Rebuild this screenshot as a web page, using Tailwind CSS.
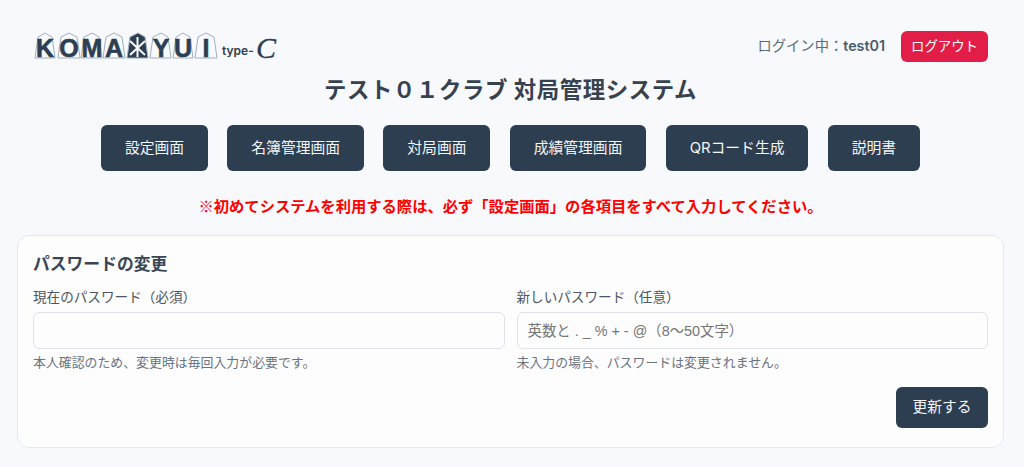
<!DOCTYPE html>
<html lang="ja">
  <head>
    <meta charset="UTF-8" />
    <meta name="viewport" content="width=device-width, initial-scale=1.0" />
    <title>テスト０１クラブ 対局管理システム</title>
    <script src="https://cdn.jsdelivr.net/npm/@tailwindcss/browser@4"></script>
  </head>
  <body class="bg-[#f8f9fc] font-['Inter','Noto_Sans_CJK_JP',sans-serif] text-[#2d3e50] [text-spacing-trim:space-all]">
    <div class="h-[467px] overflow-hidden pt-[30px] pr-[20px] pl-[17px]">
      <header class="flex h-[32px] items-center justify-between pr-[16px] pl-[17px]">
        <svg width="260" height="36" viewBox="0 0 260 36" role="img" aria-label="KOMADYUI type-C">
          <g fill="#f8f9fc" stroke="#9fb0bd" stroke-width="1">
            <path d="M1 30 L4 9 L11 5 L18 9 L21 30 Z" />
            <path d="M24 30 L27 9 L35 5 L43 9 L46 30 Z" />
            <path d="M47 30 L50 9 L58 5 L65 9 L68 30 Z" />
            <path d="M69 30 L72 9 L80 5 L88 9 L91 30 Z" />
            <path d="M93 30 L96 9 L104 5 L111 9 L114 30 Z" fill="#2d3e50" />
            <path d="M116 30 L119 9 L127 5 L134 9 L137 30 Z" />
            <path d="M139 30 L142 9 L149 5 L156 9 L159 30 Z" />
            <path d="M161 30 L164 9 L172 5 L180 9 L183 30 Z" />
          </g>
          <g fill="#2d3e50" stroke="#2d3e50" stroke-width="0.6" font-family="Liberation Sans" font-weight="700" font-size="25" text-anchor="middle">
            <text x="11" y="29">K</text>
            <text x="35" y="29">O</text>
            <text x="58" y="29">M</text>
            <text x="80" y="29">A</text>
            <text x="127" y="29">Y</text>
            <text x="149" y="29">U</text>
            <text x="172" y="29">I</text>
          </g>
          <path d="M103.5 9 V29 M96 13 L111 27 M111 13 L96 27" stroke="#f8f9fc" stroke-width="2" />
          <text x="188" y="27" fill="#2d3e50" font-family="Inter" font-weight="600" font-size="12">type-</text>
          <text x="222" y="30" fill="#2d3e50" stroke="#2d3e50" stroke-width="0.3" font-family="Liberation Serif" font-style="italic" font-size="30">C</text>
        </svg>
        <div class="flex items-center gap-[16px]">
          <span class="text-[14.3px] text-[#5a6b7b]">ログイン中：<b class="font-semibold text-[#4a5a6a]">test01</b></span>
          <button class="h-[31px] w-[87px] rounded-[6px] bg-[#e11d48] text-[13.4px] text-white">ログアウト</button>
        </div>
      </header>

      <h1 class="mt-[11px] text-center text-[22.4px] leading-[34px] font-bold tracking-[0.6px] text-[#36424f]">テスト０１クラブ 対局管理システム</h1>

      <nav class="mt-[18px] flex justify-center gap-[19.2px]">
        <a class="flex h-[46px] items-center rounded-[6px] bg-[#2d3e50] px-[24px] text-[14.8px] text-[#f4f5f7]">設定画面</a>
        <a class="flex h-[46px] items-center rounded-[6px] bg-[#2d3e50] px-[24px] text-[14.8px] text-[#f4f5f7]">名簿管理画面</a>
        <a class="flex h-[46px] items-center rounded-[6px] bg-[#2d3e50] px-[24px] text-[14.8px] text-[#f4f5f7]">対局画面</a>
        <a class="flex h-[46px] items-center rounded-[6px] bg-[#2d3e50] px-[24px] text-[14.8px] text-[#f4f5f7]">成績管理画面</a>
        <a class="flex h-[46px] items-center rounded-[6px] bg-[#2d3e50] px-[24px] text-[14.8px] text-[#f4f5f7]">QRコード生成</a>
        <a class="flex h-[46px] items-center rounded-[6px] bg-[#2d3e50] px-[24px] text-[14.8px] text-[#f4f5f7]">説明書</a>
      </nav>

      <p class="mt-[23px] text-center font-['Noto_Sans_CJK_JP',sans-serif] text-[15.3px] leading-[22px] font-bold text-[#ff0000]">※初めてシステムを利用する際は、必ず「設定画面」の各項目をすべて入力してください。</p>

      <section class="mt-[19px] h-[213px] rounded-[12px] border border-[#e5e9ef] bg-[#fdfdfe] px-[15px] pt-[16px]">
        <h2 class="text-[16.8px] leading-[24px] font-bold text-[#3b4653]">パスワードの変更</h2>
        <div class="mt-[11px] grid grid-cols-2 gap-[12px]">
          <div>
            <label class="block text-[13.6px] leading-[20px] text-[#4b5563]">現在のパスワード（必須）</label>
            <input type="password" class="mt-[5px] block h-[37px] w-full rounded-[6px] border border-[#dfe3e8] bg-[#fdfdfe] px-[10px] text-[15px]" />
            <p class="mt-[5px] text-[12.9px] leading-[18px] text-[#6b7280]">本人確認のため、変更時は毎回入力が必要です。</p>
          </div>
          <div>
            <label class="block text-[13.6px] leading-[20px] text-[#4b5563]">新しいパスワード（任意）</label>
            <input type="password" placeholder="英数と . _ % + - @（8〜50文字）" class="mt-[5px] block h-[37px] w-full rounded-[6px] border border-[#dfe3e8] bg-[#fdfdfe] px-[10px] font-['Liberation_Sans','Noto_Sans_CJK_JP',sans-serif] text-[14.4px] placeholder:text-[#757575]" />
            <p class="mt-[5px] text-[12.9px] leading-[18px] text-[#6b7280]">未入力の場合、パスワードは変更されません。</p>
          </div>
        </div>
        <div class="mt-[15px] flex justify-end">
          <button class="h-[41px] w-[92px] rounded-[6px] bg-[#2d3e50] text-[14.8px] text-[#f4f5f7]">更新する</button>
        </div>
      </section>
    </div>
  </body>
</html>
